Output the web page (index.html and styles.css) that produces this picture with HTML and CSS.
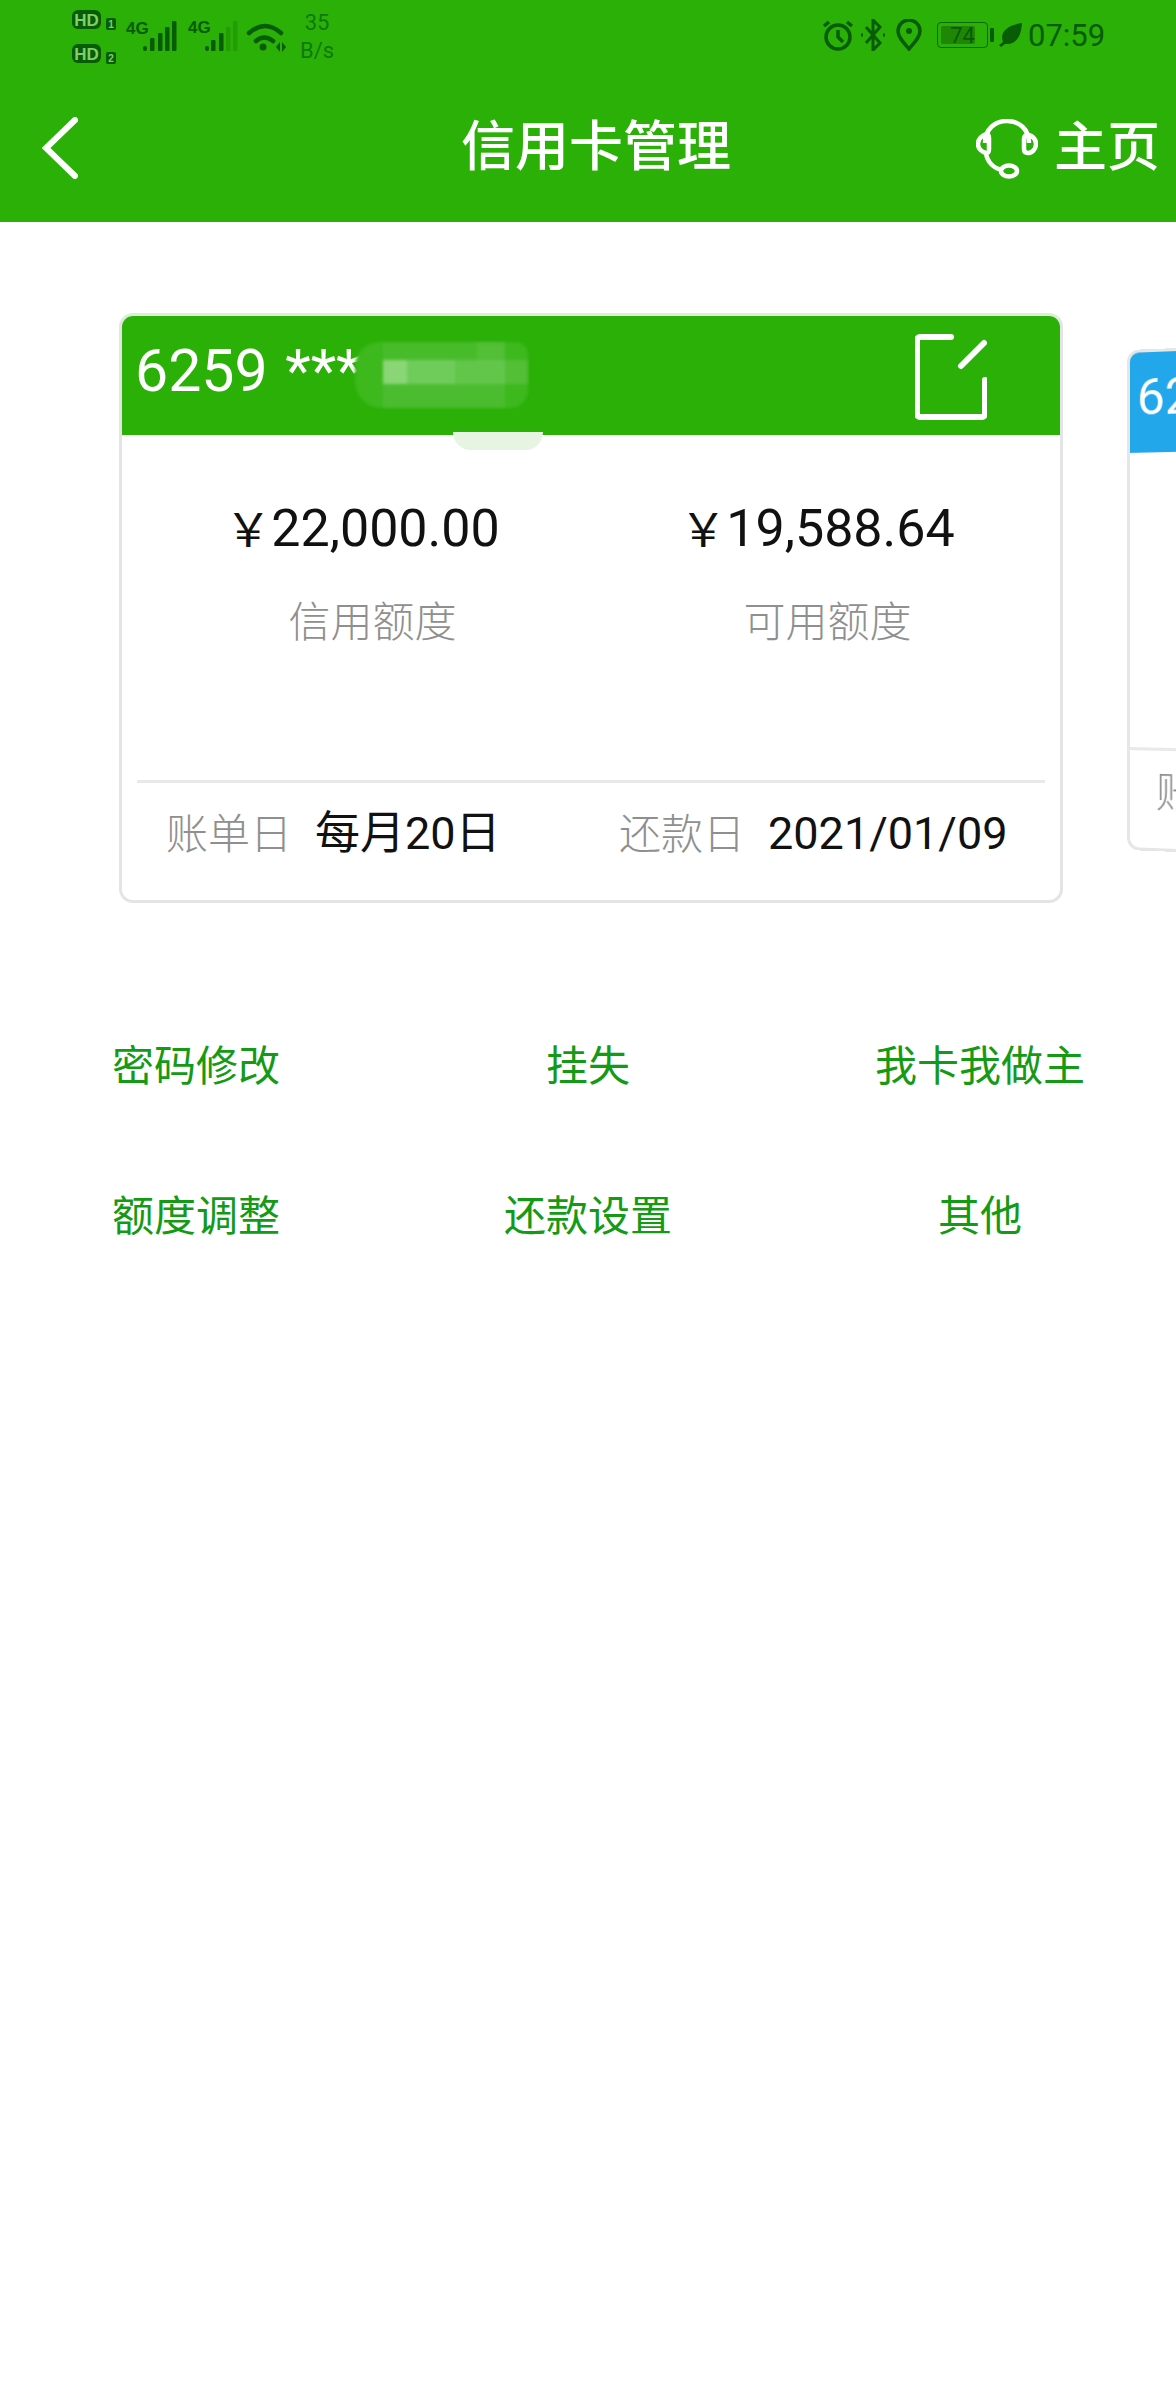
FILE: index.html
```html
<!DOCTYPE html>
<html lang="zh-CN">
<head>
<meta charset="utf-8">
<title>信用卡管理</title>
<link rel="stylesheet" href="styles.css">
</head>
<body>
<header class="top">
  <div class="status">
    <svg class="status-left" viewBox="0 0 220 56" width="220" height="56">
      <g class="ic-dark">
        <rect x="1" y="0" width="29" height="19" rx="6"/>
        <rect x="1" y="34" width="29" height="19" rx="6"/>
        <rect x="35" y="8" width="10" height="12" rx="2"/>
        <rect x="35" y="42" width="10" height="12" rx="2"/>
        <rect x="72" y="36" width="4" height="5" rx="2"/>
        <rect x="79" y="28" width="4.500" height="13" rx="1"/>
        <rect x="87" y="23" width="4.500" height="18" rx="1"/>
        <rect x="94" y="17" width="4.500" height="24" rx="1"/>
        <rect x="101" y="11" width="4.500" height="30" rx="1"/>
        <rect x="134" y="36" width="4" height="5" rx="2"/>
        <rect x="140" y="30" width="4.500" height="11" rx="1"/>
        <rect x="148" y="23" width="4.500" height="18" rx="1"/>
        <rect x="155" y="17" width="4.500" height="24" rx="1" opacity=".22"/>
        <rect x="162" y="11" width="4.500" height="30" rx="1" opacity=".22"/>
        <circle cx="192" cy="37" r="3.500"/>
        <path d="M205 37l4-5v10zM211 32l4 5-4 5z"/>
      </g>
      <g class="ic-line">
        <path d="M178 23q16-14 32 0"/>
        <path d="M185 31q8-7 17 0"/>
      </g>
      <text class="hd" x="15.500" y="15.500">HD</text>
      <text class="hd" x="15.500" y="49.500">HD</text>
      <text class="sim" x="40" y="18">1</text>
      <text class="sim" x="40" y="52">2</text>
      <text class="g4" x="55" y="24">4G</text>
      <text class="g4" x="117" y="23">4G</text>
    </svg>
    <div class="speed"><span>35</span><span>B/s</span></div>
    <div class="status-right">
      <svg class="ic-alarm" viewBox="0 0 32 32" width="32" height="32">
        <circle cx="16" cy="18" r="12"/>
        <path d="M16 11v7l5 5M2 7l5-4M30 7l-5-4"/>
      </svg>
      <svg class="ic-bt" viewBox="0 0 26 32" width="26" height="32">
        <path d="M6 8l14 16-7 7V1l7 7L6 24M1 16h2M23 16h2"/>
      </svg>
      <svg class="ic-loc" viewBox="0 0 26 32" width="26" height="32">
        <path d="M13 30C7 23 2 18 2 12a11 11 0 0 1 22 0c0 6-5 11-11 18z"/>
        <circle class="dot" cx="13" cy="12" r="3"/>
      </svg>
      <div class="battery"><div class="battery-fill"></div><span class="battery-num">74</span></div>
      <div class="battery-nub"></div>
      <svg class="ic-leaf" viewBox="0 0 24 24" width="24" height="24">
        <path d="M23 0C22 14 17 22 6 21L2 24 0 22l4-3C0 8 10 2 23 0z"/>
      </svg>
      <span class="time">07:59</span>
    </div>
  </div>
  <nav class="nav">
    <svg class="back" viewBox="0 0 36 62" width="36" height="62"><path d="M33 3L4 31l29 28"/></svg>
    <h1 class="title">信用卡管理</h1>
    <div class="home">
      <svg class="headset" viewBox="0 0 62 60" width="62" height="60">
        <path d="M9 24C9 10 19 2 31 2s22 8 22 22"/>
        <path d="M11 15c-5 1-9 5-9 10s4 8 8 9c3 0 3-2 3-4V19c0-2-1-4-2-4z"/>
        <path d="M51 16c5 0 9 4 9 9s-4 9-8 9c-3 0-4-2-4-4V20c0-2 1-4 3-4z"/>
        <path d="M10 34c1 9 8 16 17 17"/>
        <ellipse cx="33" cy="52" rx="8" ry="5.500"/>
      </svg>
      <span class="home-text">主页</span>
    </div>
  </nav>
</header>

<section class="carousel">
  <article class="card">
    <div class="card-head">
      <span class="card-no">6259 ***</span>
      <svg class="edit" viewBox="0 0 72 88" width="72" height="88">
        <path d="M36 4H5a3 3 0 0 0-3 3v74a3 3 0 0 0 3 3h62a3 3 0 0 0 3-3V47"/>
        <path d="M46 33l23-23"/>
      </svg>
      <div class="mosaic" aria-hidden="true">
        <i class="m1"></i><i class="m2"></i><i class="m3"></i><i class="m4"></i><i class="m5"></i><i class="m6"></i><i class="m7"></i>
      </div>
      <div class="smear"></div>
    </div>
    <div class="amounts">
      <div class="amount-col"><div class="amount"><span class="yen">￥</span>22,000.00</div><div class="label">信用额度</div></div>
      <div class="amount-col"><div class="amount"><span class="yen">￥</span>19,588.64</div><div class="label">可用额度</div></div>
    </div>
    <div class="bill">
      <div class="bill-a"><span class="label">账单日</span><span class="bill-val">每月20日</span></div>
      <div class="bill-b"><span class="label">还款日</span><span class="bill-val">2021/01/09</span></div>
    </div>
  </article>
  <article class="card-next">
    <div class="next-head">6259 ***</div>
    <div class="next-body"><span class="label">账单日</span></div>
  </article>
</section>

<section class="actions">
  <a class="action">密码修改</a>
  <a class="action">挂失</a>
  <a class="action">我卡我做主</a>
  <a class="action">额度调整</a>
  <a class="action">还款设置</a>
  <a class="action">其他</a>
</section>
</body>
</html>
```

FILE: styles.css
```css
* { box-sizing: border-box; }
html, body { margin: 0; padding: 0; background: #fff; }
body {
  width: 1176px;
  height: 2400px;
  overflow: hidden;
  font-family: Roboto, "Noto Sans CJK SC", sans-serif;
}

/* header */
.top { background: #2bb007; height: 222px; }
.status {
  height: 70px;
  display: flex;
  align-items: flex-start;
  padding-left: 71px;
  color: #0b6a06;
}
.status-left { margin-top: 10px; flex: none; }
.ic-dark { fill: #075c05; }
.ic-line { fill: none; stroke: #075c05; stroke-width: 4.500; stroke-linecap: round; }
.hd { fill: #7ed068; font: 700 17px "Liberation Sans", sans-serif; text-anchor: middle; }
.sim { fill: #7ed068; font: 700 10px "Liberation Sans", sans-serif; text-anchor: middle; }
.g4 { fill: #075c05; font: 700 17px "Liberation Sans Narrow", "Liberation Sans", sans-serif; }
.speed {
  display: flex;
  flex-direction: column;
  align-items: center;
  width: 46px;
  margin-left: 3px;
  margin-top: 9px;
  font-size: 22px;
  line-height: 28px;
  color: #0d7a0a;
}
.status-right {
  display: flex;
  align-items: center;
  margin-left: 482px;
  margin-top: 19px;
  height: 32px;
}
.status-right svg { flex: none; }
.ic-alarm, .ic-bt, .ic-loc { fill: none; stroke: #075c05; stroke-width: 3.500; }
.ic-bt { margin-left: 6px; stroke-width: 3; }
.ic-loc { margin-left: 10px; }
.ic-loc .dot { fill: #075c05; stroke: none; }
.ic-leaf { fill: #075c05; margin-left: 5px; }
.battery {
  position: relative;
  width: 51px;
  height: 26px;
  margin-left: 15px;
  border: 1.500px solid #0b6a06;
  border-radius: 4px;
  display: flex;
  align-items: center;
  justify-content: center;
}
.battery-fill {
  position: absolute;
  left: 3px; top: 3px; bottom: 3px;
  width: 34px;
  background: #1f8606;
  border-radius: 2px;
}
.battery-num { position: relative; font-size: 22px; color: #075c05; }
.battery-nub { width: 4px; height: 14px; margin-left: 2px; background: #075c05; border-radius: 1px; }
.time { margin-left: 5px; font-size: 31px; color: #075c05; }

.nav {
  height: 152px;
  display: grid;
  grid-template-columns: 1fr auto 1fr;
  align-items: center;
  padding: 4px 0 0 16px;
}
.back { margin-left: 26px; fill: none; stroke: #fff; stroke-width: 6; stroke-linecap: round; }
.title { margin: 0; font-weight: 500; font-size: 54px; color: #fff; line-height: 1; }
.home { justify-self: end; display: flex; align-items: center; margin-right: 16px; }
.headset { fill: none; stroke: #fff; stroke-width: 4.500; margin-top: 2px; }
.home-text { margin-left: 16px; font-size: 53px; font-weight: 500; color: #fff; line-height: 1; }

/* carousel */
.carousel {
  display: flex;
  align-items: flex-start;
  padding: 91px 0 0 119px;
  overflow: hidden;
}
.card {
  flex: none;
  width: 944px;
  height: 590px;
  background: #fff;
  border: 3px solid #e4e4e4;
  border-top-color: #d9f0d2;
  border-radius: 14px;
  overflow: hidden;
  display: flex;
  flex-direction: column;
}
.card-head {
  position: relative;
  flex: none;
  height: 119px;
  background: #2bb007;
  display: flex;
  align-items: center;
  justify-content: space-between;
  padding: 0 73px 0 13px;
  color: #fff;
}
.card-no { font-size: 59px; line-height: 1; padding-bottom: 10px; word-spacing: 3px; }
.edit { fill: none; stroke: #fff; stroke-width: 6; stroke-linecap: round; margin-top: 3px; }

.mosaic {
  position: absolute;
  left: 233px; top: 26px;
  width: 173px; height: 66px;
  background: #3db81d;
  border-radius: 24px 12px 18px 26px;
  filter: blur(1.500px);
}
.mosaic i { position: absolute; display: block; }
.m1 { left: 28px; top: 0; width: 122px; height: 18px; background: #48bb2b; }
.m2 { left: 28px; top: 18px; width: 24px; height: 24px; background: #8ad677; }
.m3 { left: 52px; top: 18px; width: 48px; height: 24px; background: #70cc5a; }
.m4 { left: 100px; top: 18px; width: 50px; height: 24px; background: #62c64b; }
.m5 { left: 150px; top: 18px; width: 23px; height: 24px; background: #52bf37; }
.m6 { left: 122px; top: 0; width: 28px; height: 18px; background: #52bf37; }
.m7 { left: 28px; top: 42px; width: 122px; height: 24px; background: #4bbc2f; }
.smear {
  position: absolute;
  left: 331px; top: 116px;
  width: 90px; height: 18px;
  background: #e6f4e1;
  border-radius: 0 0 45px 45px;
}

.amounts {
  flex: none;
  height: 348px;
  margin: 0 15px;
  padding-left: 8px;
  display: grid;
  grid-template-columns: 455px 455px;
  border-bottom: 3px solid #e9e9e9;
}
.amount-col { display: flex; flex-direction: column; align-items: center; padding-top: 56px; }
.amount { font-size: 52px; line-height: 70px; color: #111; padding-right: 20px; white-space: nowrap; }
.yen { font-family: "Noto Sans CJK SC", sans-serif; font-size: 46px; }
.label { font-size: 42px; line-height: 60px; color: #8f8f8f; font-family: "Noto Sans CJK SC", sans-serif; font-weight: 300; }
.amount-col .label { margin-top: 25px; }

.bill {
  flex: 1;
  display: flex;
  align-items: center;
  padding: 0 0 19px 44px;
  font-family: "Noto Sans CJK SC", sans-serif;
}
.bill-a, .bill-b { display: flex; align-items: baseline; white-space: nowrap; line-height: 60px; }
.bill-a { width: 453px; }
.bill-val { margin-left: 23px; font-size: 45px; font-family: Roboto, "Noto Sans CJK SC", sans-serif; color: #111; }

/* next card, turned in perspective by the carousel */
.card-next {
  flex: none;
  width: 400px;
  height: 500px;
  margin: 37px 0 0 64px;
  background: #fff;
  border: 3px solid #e6e6e6;
  border-radius: 12px;
  overflow: hidden;
  transform: perspective(1000px) rotateY(-9deg);
  transform-origin: 0 50%;
}
.next-head {
  height: 100px;
  background: #22a7ea;
  color: #fff;
  font-size: 50px;
  line-height: 90px;
  padding-left: 7px;
  white-space: nowrap;
}
.next-body {
  margin-top: 294px;
  border-top: 3px solid #e9e9e9;
  padding: 8px 0 0 26px;
}

/* actions */
.actions {
  display: grid;
  grid-template-columns: repeat(3, 392px);
  grid-auto-rows: 150px;
  padding-top: 84px;
}
.action {
  display: flex;
  align-items: center;
  justify-content: center;
  font-family: "Noto Sans CJK SC", sans-serif;
  font-size: 42px;
  color: #149a14;
}
```
